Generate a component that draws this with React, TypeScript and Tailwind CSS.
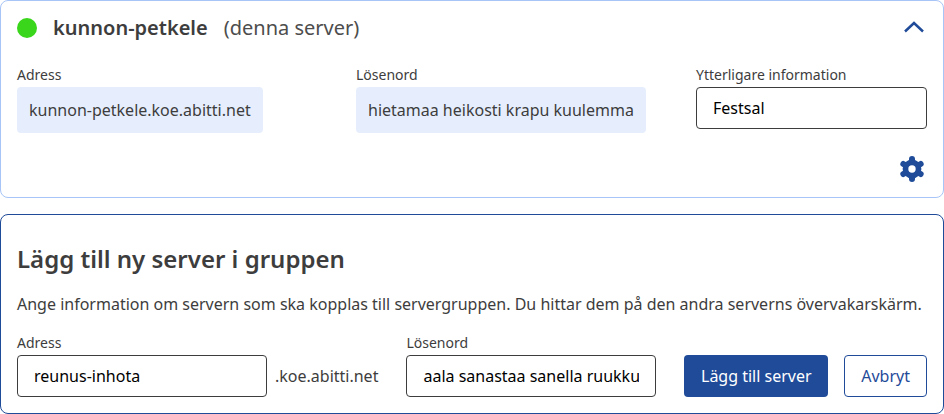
import React from "react";

const font = { fontFamily: '"Noto Sans", sans-serif' };

function Field({ label, children }: { label: string; children: React.ReactNode }) {
  return (
    <div className="flex flex-col">
      <label className="text-[14px] leading-[20px] text-[#3d3d3d] mb-[2px]">{label}</label>
      {children}
    </div>
  );
}

function Readonly({ value, width }: { value: string; width: string }) {
  return (
    <div className={`${width} h-[46px] px-3 flex items-center rounded-[4px] bg-[#e6eefd] text-[16px] text-[#3d3d3d] whitespace-nowrap`}>
      {value}
    </div>
  );
}

function TextInput({ value, width }: { value: string; width: string }) {
  return (
    <input
      readOnly
      defaultValue={value}
      className={`${width} h-[42px] px-4 rounded-[4px] border border-[#3d3d3d] bg-white text-[16px] text-black outline-none`}
    />
  );
}

function Gear() {
  const angles = [90, 30, -30, -90, -150, 150];
  return (
    <svg width="26" height="26" viewBox="-13 -13 26 26">
      <circle cx="0" cy="0" r="9.4" fill="#1f4b99" />
      {angles.map((a) => (
        <line
          key={a}
          x1="0"
          y1="0"
          x2={10 * Math.cos((a * Math.PI) / 180)}
          y2={10 * Math.sin((a * Math.PI) / 180)}
          stroke="#1f4b99"
          strokeWidth="6"
          strokeLinecap="round"
        />
      ))}
      <circle cx="0" cy="0" r="3.7" fill="#ffffff" />
    </svg>
  );
}

export default function App() {
  return (
    <div className="w-[944px] h-[414px] bg-white flex flex-col gap-4" style={font}>
      <section className="h-[198px] rounded-[8px] border border-[#a8c5f7] px-4 flex flex-col">
        <div className="flex items-center justify-between h-[54px]">
          <div className="flex items-center">
            <span className="w-5 h-5 rounded-full bg-[#39d61c]" />
            <span className="ml-4 text-[20px] font-semibold text-[#3d3d3d]">kunnon-petkele</span>
            <span className="ml-4 text-[20px] text-[#4d4d4d]">(denna server)</span>
          </div>
          <button className="mr-[3px] mb-[2px] text-[#1f4b99]">
            <svg width="20" height="12" viewBox="0 0 20 12" fill="none" stroke="currentColor" strokeWidth="2.5">
              <path d="M1 10.5 L10 2 L19 10.5" />
            </svg>
          </button>
        </div>
        <div className="grid grid-cols-[339px_340px_231px] mt-[10px]">
          <Field label="Adress">
            <Readonly value="kunnon-petkele.koe.abitti.net" width="w-[246px]" />
          </Field>
          <Field label="Lösenord">
            <Readonly value="hietamaa heikosti krapu kuulemma" width="w-[290px]" />
          </Field>
          <Field label="Ytterligare information">
            <TextInput value="Festsal" width="w-[231px]" />
          </Field>
        </div>
        <div className="flex justify-end mt-[23px] pr-[2px]">
          <Gear />
        </div>
      </section>

      <section className="h-[200px] rounded-[8px] border border-[#1f4b99] px-4 flex flex-col">
        <h2 className="mt-[25px] text-[24px] leading-[38px] font-semibold text-[#3d3d3d]">Lägg till ny server i gruppen</h2>
        <p className="mt-[14px] text-[16px] leading-[24px] text-[#3d3d3d] whitespace-nowrap">
          Ange information om servern som ska kopplas till servergruppen. Du hittar dem på den andra serverns övervakarskärm.
        </p>
        <div className="flex items-end mt-[17px]">
          <Field label="Adress">
            <TextInput value="reunus-inhota" width="w-[250px]" />
          </Field>
          <span className="ml-2 h-[42px] flex items-center text-[16px] text-[#3d3d3d]">.koe.abitti.net</span>
          <div className="ml-[28px]">
            <Field label="Lösenord">
              <TextInput value="aala sanastaa sanella ruukku" width="w-[250px]" />
            </Field>
          </div>
          <button className="ml-7 w-[144px] h-[42px] rounded-[4px] bg-[#1f4b99] text-white text-[16px]">Lägg till server</button>
          <button className="ml-4 w-[83px] h-[42px] rounded-[4px] border border-[#1f4b99] bg-white text-[#1f4b99] text-[16px]">Avbryt</button>
        </div>
      </section>
    </div>
  );
}
